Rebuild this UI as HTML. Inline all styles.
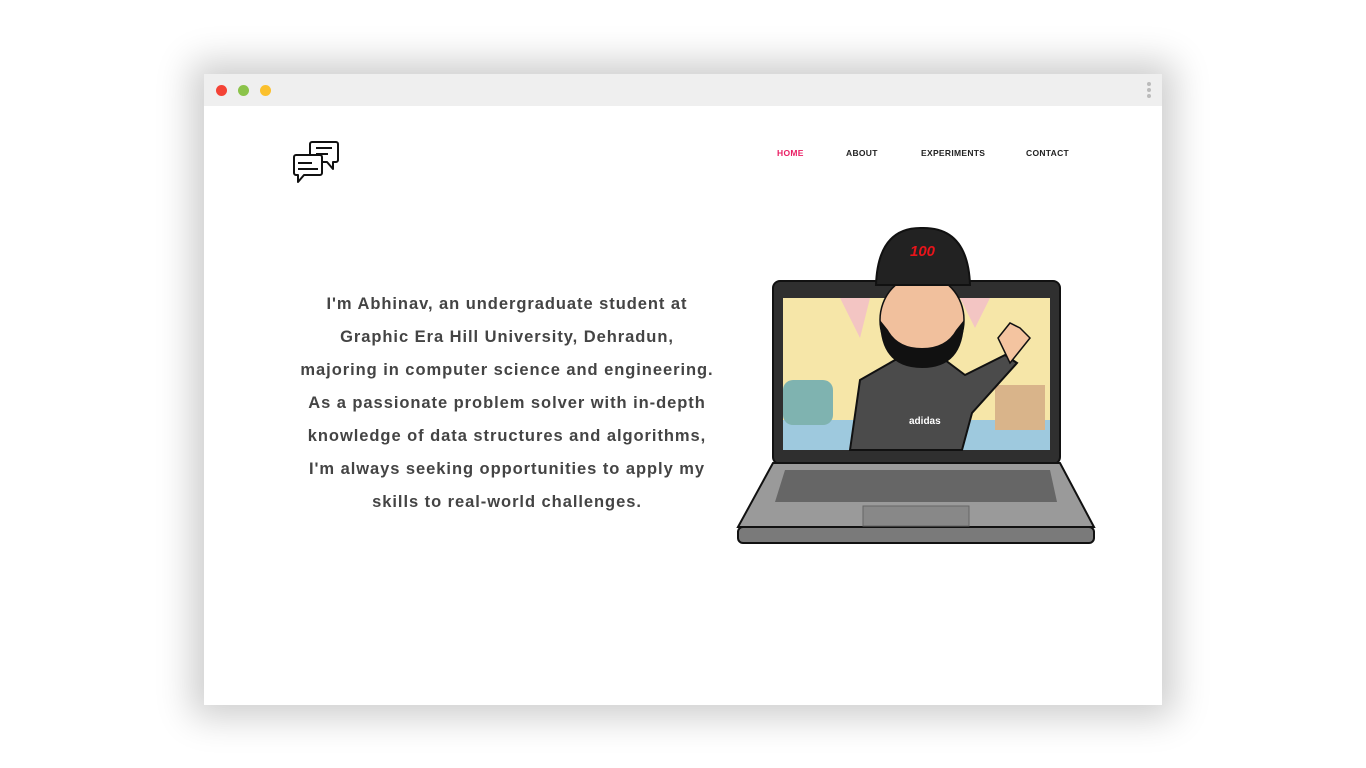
<!DOCTYPE html>
<html><head><meta charset="utf-8"><style>
*{margin:0;padding:0;box-sizing:border-box}
body{width:1366px;height:768px;background:#fff;position:relative;overflow:hidden;font-family:"Liberation Sans",sans-serif}
.win{position:absolute;left:204px;top:74px;width:958px;height:631px;background:#fff;box-shadow:0 0 34px 12px rgba(0,0,0,0.2)}
.bar{height:32px;background:#efefef;position:relative}
.dot{position:absolute;top:11px;width:11px;height:11px;border-radius:50%}
.nav{position:absolute;top:148px;font-size:8.5px;font-weight:bold;color:#222;letter-spacing:0.3px}
.txt{position:absolute;left:257px;top:288px;width:500px;text-align:center;font-family:"Liberation Sans",sans-serif;font-weight:bold;font-size:16.5px;letter-spacing:0.95px;line-height:33px;color:#444;white-space:nowrap}
</style></head><body>
<div class="win"><div class="bar">
<div class="dot" style="left:12px;background:#f44336"></div>
<div class="dot" style="left:34px;background:#8bc34a"></div>
<div class="dot" style="left:56px;background:#fbc02d"></div>
<div style="position:absolute;right:11px;top:8px;width:4px;height:4px;border-radius:50%;background:#bbb;box-shadow:0 6px 0 #bbb,0 12px 0 #bbb"></div>
</div></div>
<svg style="position:absolute;left:290px;top:138px" width="54" height="50" viewBox="0 0 54 50" fill="none" stroke="#111" stroke-width="2" stroke-linejoin="round">
<path d="M22 4h24a2 2 0 0 1 2 2v16a2 2 0 0 1-2 2h-3v7l-6-7h-15a2 2 0 0 1-2-2v-16a2 2 0 0 1 2-2z" fill="#fff"/>
<path d="M26 10h16M26 16h12"/>
<path d="M6 17h24a2 2 0 0 1 2 2v16a2 2 0 0 1-2 2h-16l-6 7v-7h-2a2 2 0 0 1-2-2v-16a2 2 0 0 1 2-2z" fill="#fff"/>
<path d="M8 25h14M8 31h20"/>
</svg>
<div class="nav" style="left:777px;color:#e91e63">HOME</div>
<div class="nav" style="left:846px">ABOUT</div>
<div class="nav" style="left:921px">EXPERIMENTS</div>
<div class="nav" style="left:1026px">CONTACT</div>
<div class="txt">I'm Abhinav, an undergraduate student at<br>Graphic Era Hill University, Dehradun,<br>majoring in computer science and engineering.<br>As a passionate problem solver with in-depth<br>knowledge of data structures and algorithms,<br>I'm always seeking opportunities to apply my<br>skills to real-world challenges.</div>
<svg style="position:absolute;left:0;top:0" width="1366" height="768">
<rect x="773" y="281" width="287" height="183" rx="7" fill="#2f2f2f" stroke="#111" stroke-width="2"/>
<rect x="783" y="298" width="267" height="152" fill="#f6e6a8"/>
<rect x="783" y="420" width="267" height="30" fill="#9ec9de"/>
<rect x="783" y="380" width="50" height="45" rx="10" fill="#7fb3b0"/>
<rect x="995" y="385" width="50" height="45" fill="#d9b48a"/>
<path d="M840 298l20 40 10-40zM960 298l15 30 15-30z" fill="#f2b6cf" opacity=".7"/>
<path d="M738 527l35-64h287l34 64z" fill="#9a9a9a" stroke="#111" stroke-width="2"/>
<rect x="738" y="527" width="356" height="16" rx="5" fill="#7a7a7a" stroke="#111" stroke-width="2"/>
<path d="M785 470h265l7 32h-282z" fill="#666"/>
<rect x="863" y="506" width="106" height="20" fill="#888" stroke="#666"/>
<path d="M850 450l10-70 35-20h50l20 15 40-20 12 8-45 50-10 37z" fill="#4b4b4b" stroke="#111" stroke-width="2"/>
<path d="M998 338l12-15 10 5 10 10-20 25z" fill="#f4c4a0" stroke="#111" stroke-width="1.5"/>
<ellipse cx="922" cy="320" rx="42" ry="45" fill="#f1c09d" stroke="#111" stroke-width="1.5"/>
<path d="M880 320q0 48 42 48q42 0 42-48l-8 10q-10 18-34 18q-24 0-34-18z" fill="#111"/>
<path d="M876 285q2-58 46-57q46-1 48 57z" fill="#222" stroke="#111" stroke-width="2"/>
<text x="910" y="256" font-family="Liberation Sans" font-weight="bold" font-style="italic" font-size="15" fill="#e8141a">100</text>
<text x="909" y="424" font-family="Liberation Sans" font-weight="bold" font-size="10" fill="#fff">adidas</text>
</svg>
</body></html>
